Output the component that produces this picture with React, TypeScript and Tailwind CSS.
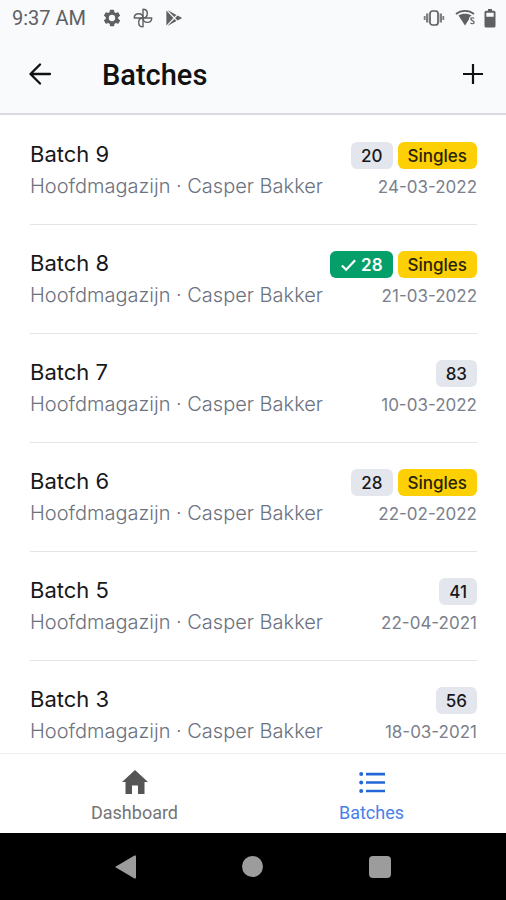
import { ReactNode } from "react";

interface Batch {
  id: number;
  count: number;
  date: string;
  singles?: boolean;
  done?: boolean;
}

const batches: Batch[] = [
  { id: 9, count: 20, date: "24-03-2022", singles: true },
  { id: 8, count: 28, date: "21-03-2022", singles: true, done: true },
  { id: 7, count: 83, date: "10-03-2022" },
  { id: 6, count: 28, date: "22-02-2022", singles: true },
  { id: 5, count: 41, date: "22-04-2021" },
  { id: 3, count: 56, date: "18-03-2021" },
];

function StatusBar() {
  return (
    <div className="flex h-9 items-center justify-between pr-[10px] pl-3 text-[#5f6062]">
      <div className="flex items-center">
        <span className="text-[20px] leading-6">9:37 AM</span>

        {/* settings */}
        <svg viewBox="0 0 24 24" className="ml-4 size-5" fill="currentColor">
          <path
            fillRule="evenodd"
            d="M19.4 13a7.5 7.5 0 0 0 0-2l2.1-1.6a.5.5 0 0 0 .1-.7l-2-3.4a.5.5 0 0 0-.6-.2l-2.5 1a7.3 7.3 0 0 0-1.7-1l-.4-2.6A.5.5 0 0 0 14 2h-4a.5.5 0 0 0-.5.4l-.4 2.7a7.3 7.3 0 0 0-1.7 1l-2.4-1a.5.5 0 0 0-.6.2l-2 3.4a.5.5 0 0 0 .1.7L4.6 11a7.5 7.5 0 0 0 0 2l-2.1 1.6a.5.5 0 0 0-.1.7l2 3.4c.1.2.4.3.6.2l2.5-1a7.3 7.3 0 0 0 1.7 1l.4 2.7c0 .2.2.4.5.4h4c.2 0 .5-.2.5-.4l.4-2.7a7.3 7.3 0 0 0 1.7-1l2.4 1c.2.1.5 0 .6-.2l2-3.4a.5.5 0 0 0-.1-.7zM12 15.8a3.8 3.8 0 1 1 0-7.6 3.8 3.8 0 0 1 0 7.6z"
          />
        </svg>

        {/* pinwheel */}
        <svg
          viewBox="0 0 24 24"
          className="ml-[11px] size-5"
          fill="none"
          stroke="currentColor"
          strokeWidth="1.7"
          strokeLinejoin="round"
        >
          <path d="M12 12V1.5c3.2 0 5.2 2.3 5.2 5.2S15.2 12 12 12z" />
          <path d="M12 12h10.5c0 3.2-2.3 5.2-5.2 5.2S12 15.2 12 12z" />
          <path d="M12 12v10.5c-3.2 0-5.2-2.3-5.2-5.2S8.8 12 12 12z" />
          <path d="M12 12H1.5c0-3.2 2.3-5.2 5.2-5.2S12 8.8 12 12z" />
        </svg>

        {/* play store */}
        <svg viewBox="0 0 20 20" className="ml-3 size-[18px]" fill="currentColor">
          <path d="M1.5 1.8v16.4L9.3 10z" />
          <path d="M2.7 1.2 10.3 9l2.4-2.4zM2.7 18.8l7.6-7.8 2.4 2.4z" />
          <path d="m13.9 7.2-2.7 2.8 2.7 2.8 4.3-2.2c.6-.3.6-.9 0-1.2z" />
        </svg>
      </div>

      <div className="flex items-center">
        {/* vibrate */}
        <svg viewBox="0 0 22 18" className="h-[18px] w-[22px]" fill="none" stroke="currentColor">
          <rect x="7" y="2" width="8" height="14" rx="2.5" strokeWidth="1.7" />
          <path d="M4.2 4.5v9M17.8 4.5v9" strokeWidth="2.4" opacity=".8" />
          <path d="M1.7 7v4M20.3 7v4" strokeWidth="1.8" opacity=".8" />
        </svg>

        {/* wifi */}
        <svg viewBox="0 0 22 18" className="ml-2.5 h-[18px] w-[22px]" fill="currentColor">
          <path d="M3.5 6.5c3.5-2.5 9.5-2.5 13 0L10 16.5z" />
          <path d="M1 5C6 .8 14 .8 19 5" fill="none" stroke="currentColor" strokeWidth="1.7" />
          <path
            d="M19 9.5c-1-1.2-3.2-.9-3.2.6 0 1.8 3.3 1.2 3.3 3.2 0 1.7-2.6 1.9-3.6.6"
            fill="none"
            stroke="#f8fafc"
            strokeWidth="3.5"
          />
          <path
            d="M19 9.5c-1-1.2-3.2-.9-3.2.6 0 1.8 3.3 1.2 3.3 3.2 0 1.7-2.6 1.9-3.6.6"
            fill="none"
            stroke="currentColor"
            strokeWidth="1.2"
          />
        </svg>

        {/* battery */}
        <svg viewBox="0 0 12 20" className="ml-[7px] h-5 w-3" fill="currentColor">
          <path
            fillRule="evenodd"
            d="M4 1h4v1.8h2a1.5 1.5 0 0 1 1.5 1.5V18a1.5 1.5 0 0 1-1.5 1.5H2A1.5 1.5 0 0 1 .5 18V4.3A1.5 1.5 0 0 1 2 2.8h2zM2.3 4.8v4h7.4v-4z"
          />
        </svg>
      </div>
    </div>
  );
}

function Badge({ className, children }: { className: string; children: ReactNode }) {
  return (
    <span
      className={`flex h-[27px] items-center gap-1 rounded-md px-[10px] text-[17px] leading-6 ${className}`}
    >
      {children}
    </span>
  );
}

function BatchRow({ batch }: { batch: Batch }) {
  return (
    <li className="flex h-[109px] justify-between border-b border-[#e4e4e7] pt-6">
      <div>
        <h2 className="text-[22px] leading-7 text-[#18181b]">Batch {batch.id}</h2>
        <p className="mt-1 text-[20px] leading-7 font-light text-[#6b7280]">
          Hoofdmagazijn · Casper Bakker
        </p>
      </div>

      <div className="flex flex-col items-end pt-[2px]">
        <div className="flex gap-[5px]">
          {batch.done ? (
            <Badge className="bg-[#059f69] font-semibold text-white">
              <svg
                viewBox="0 0 18 16"
                className="h-4 w-[17px]"
                fill="none"
                stroke="currentColor"
                strokeWidth="2.4"
              >
                <path d="m2 8.5 4.5 4.5L16 3" />
              </svg>
              {batch.count}
            </Badge>
          ) : (
            <Badge className="bg-[#e4e6ed] font-medium text-[#18181b]">{batch.count}</Badge>
          )}
          {batch.singles && (
            <Badge className="bg-[#fdd005] font-medium text-[#292407]">Singles</Badge>
          )}
        </div>
        <span className="mt-1 text-[17px] leading-7 text-[#7b808b]">{batch.date}</span>
      </div>
    </li>
  );
}

function App() {
  return (
    <div className="flex h-screen flex-col bg-white font-['Roboto',sans-serif]">
      <header className="border-b-2 border-[#d9dbde] bg-[#f8fafc]">
        <StatusBar />
        <div className="flex h-[77px] items-center pr-[22px] pl-7">
          <button type="button" aria-label="Back">
            <svg
              viewBox="0 0 24 24"
              className="size-6"
              fill="none"
              stroke="#111"
              strokeWidth="2.3"
              strokeLinecap="round"
              strokeLinejoin="round"
            >
              <path d="M22 11H2.5M12 1.5 2.5 11l9.5 9.5" />
            </svg>
          </button>
          <h1 className="ml-[50px] flex-1 text-[29px] leading-8 font-medium text-[#111]">
            Batches
          </h1>
          <button type="button" aria-label="Add batch">
            <svg viewBox="0 0 22 22" className="size-[22px]" stroke="#111" strokeWidth="2.2">
              <path d="M11 0v20M1 10h20" />
            </svg>
          </button>
        </div>
      </header>

      <main className="min-h-0 flex-1 overflow-hidden pt-px pr-[29px] pl-[30px]">
        <ul className="font-['Inter',sans-serif]">
          {batches.map((batch) => (
            <BatchRow key={batch.id} batch={batch} />
          ))}
        </ul>
      </main>

      <nav className="grid h-20 grid-cols-2 border-t border-[#f0f0f1] bg-white px-4 text-[18px] leading-5">
        <a href="#dashboard" className="flex flex-col items-center pt-4 text-[#757575]">
          <svg viewBox="0 0 26 24" className="h-6 w-[26px]" fill="#555">
            <path d="M13 0 0 12h3.5v12H10v-8.5h6V24h6.5V12H26z" />
          </svg>
          <span className="mt-[9px]">Dashboard</span>
        </a>
        <a href="#batches" className="flex flex-col items-center pt-4 text-[#4a80ea]">
          <svg viewBox="0 0 26 24" className="h-6 w-[26px]" fill="#2468d8">
            <circle cx="2.2" cy="4" r="2" />
            <circle cx="2.2" cy="12.5" r="2" />
            <circle cx="2.2" cy="21" r="2" />
            <path d="M7 2.8h19v2.7H7zM7 11.2h19v2.6H7zM7 19.7h19v2.6H7z" />
          </svg>
          <span className="mt-[9px]">Batches</span>
        </a>
      </nav>

      <div className="flex h-[67px] items-center justify-between bg-black px-[115px]">
        <button type="button" aria-label="System back">
          <svg viewBox="0 0 21 24" className="h-6 w-[21px]" fill="#9c9c9c">
            <path d="M0 12 19.5.6Q21 0 21 1.5v21Q21 24 19.5 23.4z" />
          </svg>
        </button>
        <button type="button" aria-label="Home" className="size-[21px] rounded-full bg-[#9c9c9c]" />
        <button type="button" aria-label="Recent apps" className="size-[22px] rounded-sm bg-[#9c9c9c]" />
      </div>
    </div>
  );
}

export default App;
